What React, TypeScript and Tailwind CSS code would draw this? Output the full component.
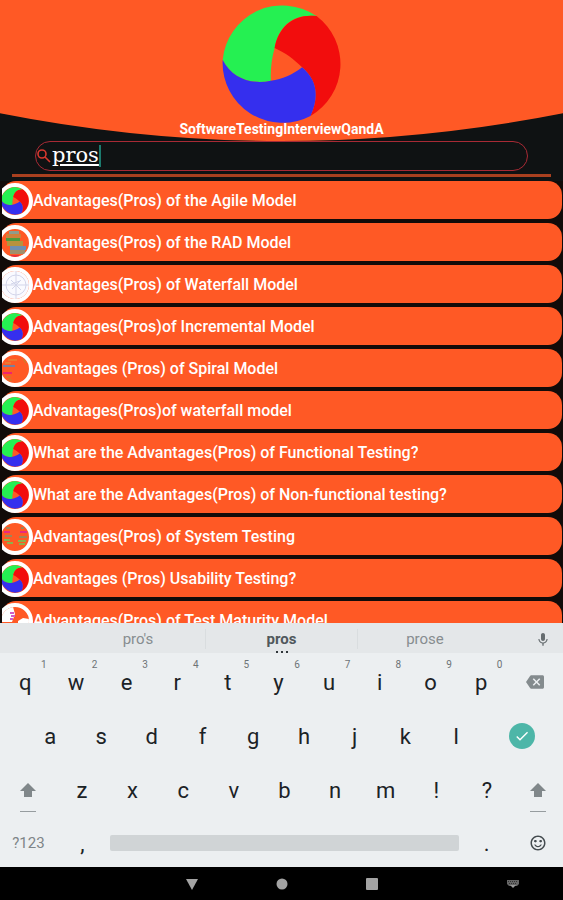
import { useState } from "react";
import { MdBackspace, MdCheck, MdKeyboardVoice, MdSentimentSatisfiedAlt } from "react-icons/md";

type Thumb = "logo" | "rad" | "waterfall" | "spiral" | "system" | "maturity";

const questions: { title: string; thumb: Thumb }[] = [
  { title: "Advantages(Pros) of the Agile Model", thumb: "logo" },
  { title: "Advantages(Pros) of the RAD Model", thumb: "rad" },
  { title: "Advantages(Pros) of Waterfall Model", thumb: "waterfall" },
  { title: "Advantages(Pros)of Incremental Model", thumb: "logo" },
  { title: "Advantages (Pros) of Spiral Model", thumb: "spiral" },
  { title: "Advantages(Pros)of waterfall model", thumb: "logo" },
  { title: "What are the Advantages(Pros) of Functional Testing?", thumb: "logo" },
  { title: "What are the Advantages(Pros) of Non-functional testing?", thumb: "logo" },
  { title: "Advantages(Pros) of System Testing", thumb: "system" },
  { title: "Advantages (Pros) Usability Testing?", thumb: "logo" },
  { title: "Advantages(Pros) of Test Maturity Model", thumb: "maturity" },
];

const topKeys = ["q", "w", "e", "r", "t", "y", "u", "i", "o", "p"];
const middleKeys = ["a", "s", "d", "f", "g", "h", "j", "k", "l"];
const bottomKeys = ["z", "x", "c", "v", "b", "n", "m", "!", "?"];

function Logo({ className }: { className?: string }) {
  return (
    <svg viewBox="0 0 358 358" className={className} aria-hidden="true">
      <path fill="#25f052" d="M2 164A179 179 0 0 1 282 33C215 25 170 60 157 128C148 160 144 195 146 226C90 238 30 220 2 164Z" />
      <path fill="#f20d0d" d="M282 33A179 179 0 0 1 264 331C290 275 285 225 239 186C213 160 190 143 157 128C168 65 215 25 282 33Z" />
      <path fill="#352fee" d="M2 164A179 179 0 0 0 264 331C290 275 285 225 239 186C210 208 180 222 146 226C90 238 30 220 2 164Z" />
    </svg>
  );
}

function ThumbArt({ kind }: { kind: Thumb }) {
  if (kind === "logo") return <Logo className="size-full" />;
  return (
    <svg viewBox="0 0 28 28" className="size-full" aria-hidden="true">
      {kind === "rad" && (
        <>
          <path fill="#8f9c8c" d="M8 2h10v3H8z" />
          <path fill="#d0803c" d="M5 5h15v4H5z" />
          <path fill="#4f9a3c" d="M5 9h14v3H5z" />
          <path fill="#b8923c" d="M6 12h16v5H6z" />
          <path fill="#6f8fb0" d="M9 17h16v4H9z" />
          <path fill="#a0906c" d="M9 21h15v4H9z" />
          <path fill="#e8303c" d="M10 26h8v2h-8z" />
        </>
      )}
      {kind === "waterfall" && (
        <>
          <path fill="#fafaff" d="M-4-4h36v36H-4z" />
          <g fill="none" stroke="#d3d5ea" strokeWidth="1">
            <circle cx="15" cy="14" r="10" />
            <path d="M15 0v28M1 14h28M10 9l10 10M20 9l-9 9M10 13l9-3" />
          </g>
        </>
      )}
      {kind === "spiral" && (
        <>
          <path stroke="#d89a3c" d="M7 5h9M4 8h6" />
          <path stroke="#7a7f9c" strokeWidth="2" d="M2 11h12" />
          <path stroke="#ee2470" strokeWidth="2" d="M2 18h9" />
          <path stroke="#b98a2c" d="M5 22h5M7 25h4M22 4l3 4" />
        </>
      )}
      {kind === "system" && (
        <>
          <path stroke="#e82a80" strokeWidth="2" d="M3 9h6M19 9h7" />
          <path stroke="#a08458" strokeWidth="2" d="M5 5h4M20 5h3M4 13h7M18 14h8" />
          <path stroke="#8fb04c" strokeWidth="2" d="M3 17h6M6 20h6M17 18h8M18 21h6" />
        </>
      )}
      {kind === "maturity" && (
        <>
          <path fill="#fff" d="M0 0h12l2 7-3 8H0z" />
          <path stroke="#d05cc8" strokeWidth="2" d="M9 6h4M10 9h4M9 12h3" />
          <path fill="#fff" d="M17 14l5-3 6 1v9H17z" />
        </>
      )}
    </svg>
  );
}

function Key({ label, hint }: { label: string; hint?: string }) {
  return (
    <button className="relative flex min-w-0 items-center justify-center pt-[6px] text-[22px] leading-7 text-[#1b2226]">
      {label}
      {hint && <span className="absolute top-1 right-1 text-[10px] leading-4 text-[#6d7376]">{hint}</span>}
    </button>
  );
}

function ShiftKey() {
  return (
    <button aria-label="Shift" className="flex min-w-0 flex-col items-center justify-center gap-[14px] pt-[18px]">
      <svg viewBox="0 0 16 14" className="h-[14px] w-4 fill-[#80878a]" aria-hidden="true">
        <path d="M8 0l8 8h-4v6H4V8H0z" />
      </svg>
      <span className="h-px w-4 bg-[#969c9f]" />
    </button>
  );
}

function Keyboard() {
  return (
    <section aria-label="Keyboard" className="shrink-0 bg-[#eceff1]">
      <div className="grid h-[30px] grid-cols-[71fr_134fr_153fr_134fr_71fr] items-center bg-[#e4e7e9] pt-[2px] text-[15px] leading-5 text-[#878d90]">
        <span />
        <button>pro's</button>
        <button className="relative border-x border-[#d9dddf] font-bold text-[#50585c]">
          pros
          <span className="absolute inset-x-0 -bottom-1 flex justify-center gap-[3px]">
            <span className="size-[2px] bg-[#30363a]" />
            <span className="size-[2px] bg-[#30363a]" />
            <span className="size-[2px] bg-[#30363a]" />
          </span>
        </button>
        <button>prose</button>
        <button aria-label="Voice input" className="flex justify-end pr-3">
          <MdKeyboardVoice className="size-4 text-[#666d70]" />
        </button>
      </div>

      <div className="grid h-[54px] grid-cols-[repeat(10,51fr)_57fr]">
        {topKeys.map((key, i) => (
          <Key key={key} label={key} hint={String((i + 1) % 10)} />
        ))}
        <button aria-label="Backspace" className="flex items-center justify-center pt-1">
          <MdBackspace className="size-[18px] text-[#848b8e]" />
        </button>
      </div>

      <div className="grid h-[54px] grid-cols-[repeat(9,51fr)_82fr] pl-[25px]">
        {middleKeys.map((key) => (
          <Key key={key} label={key} />
        ))}
        <button aria-label="Done" className="flex items-center justify-center pt-1">
          <span className="flex size-[26px] items-center justify-center rounded-full bg-[#4db6a8]">
            <MdCheck className="size-4 text-white" />
          </span>
        </button>
      </div>

      <div className="grid h-[54px] grid-cols-[57fr_repeat(9,51fr)_51fr]">
        <ShiftKey />
        {bottomKeys.map((key) => (
          <Key key={key} label={key} />
        ))}
        <ShiftKey />
      </div>

      <div className="grid h-[52px] grid-cols-[57fr_51fr_354fr_51fr_51fr]">
        <button className="pt-1 text-[15px] text-[#7e8588]">?123</button>
        <Key label="," />
        <button aria-label="Space" className="flex items-center px-[2px] pt-1">
          <span className="h-4 w-full rounded-xs bg-[#d0d4d6]" />
        </button>
        <Key label="." />
        <button aria-label="Emoji" className="flex items-center justify-center pt-1">
          <MdSentimentSatisfiedAlt className="size-[18px] text-[#454c50]" />
        </button>
      </div>
    </section>
  );
}

function NavBar() {
  return (
    <nav className="grid h-[33px] shrink-0 grid-cols-[1fr_270px_1fr] items-center bg-black">
      <span />
      <div className="grid grid-cols-3 justify-items-center">
        <button aria-label="Back">
          <svg viewBox="0 0 12 12" className="size-3 fill-[#a3a3a3]">
            <path d="M0 1h12L6 12z" />
          </svg>
        </button>
        <button aria-label="Home">
          <svg viewBox="0 0 12 12" className="size-3 fill-[#a3a3a3]">
            <circle cx="6" cy="6" r="5.5" />
          </svg>
        </button>
        <button aria-label="Recent apps">
          <svg viewBox="0 0 12 12" className="size-3 fill-[#a3a3a3]">
            <rect width="12" height="12" rx="1" />
          </svg>
        </button>
      </div>
      <button aria-label="Switch keyboard" className="flex justify-end pr-[44px]">
        <svg viewBox="0 0 12 8" className="h-2 w-3">
          <path fill="#666" d="M0 0h12v4l-2 2H2L0 4z" />
          <path stroke="#333" strokeWidth="1" strokeDasharray="1 1" d="M1 1.5h10M2 3.5h8" />
          <path fill="#999" d="M3 5h6L6 8z" />
        </svg>
      </button>
    </nav>
  );
}

export default function App() {
  const [query, setQuery] = useState("pros");

  return (
    <div className="flex h-screen flex-col overflow-hidden bg-[#0f1213] font-['Roboto',sans-serif]">
      {/* Header */}
      <header className="relative flex shrink-0 flex-col items-center pt-[5px]">
        <svg viewBox="0 0 563 142" preserveAspectRatio="none" className="absolute inset-0 size-full" aria-hidden="true">
          <path fill="#ff5925" d="M0 0H563V114Q422 142 281 142Q141 142 0 114Z" />
        </svg>
        <Logo className="relative size-[120px]" />
        <h1 className="relative -mt-1 pb-1 text-[14px] leading-4 font-bold text-white">SoftwareTestingInterviewQandA</h1>
      </header>

      {/* Search */}
      <label className="mx-[35px] flex h-[30px] shrink-0 items-center rounded-full border border-[#a82a35]">
        <svg viewBox="0 0 16 16" className="size-4 fill-none stroke-[#d8382e]" strokeWidth="1.6" aria-hidden="true">
          <circle cx="6" cy="6" r="4" />
          <path d="M9 9l5 5" />
        </svg>
        <input
          type="text"
          aria-label="Search questions"
          value={query}
          onChange={(e) => setQuery(e.target.value)}
          className="field-sizing-content pb-[2px] font-['DejaVu_Serif',serif] text-[21px] leading-6 text-white underline decoration-2 underline-offset-2 outline-none"
        />
        <span className="h-[22px] w-[2px] bg-[#1b7a6e]" />
      </label>

      <div className="mx-3 mt-[3px] h-[3px] shrink-0 bg-[#a9401f]" />

      {/* Results */}
      <ul className="mt-1 flex min-h-0 flex-1 flex-col gap-1 overflow-hidden bg-[#120b09] pr-px pl-[2px]">
        {questions.map(({ title, thumb }) => (
          <li key={title} className="shrink-0">
            <button className="flex h-[38px] w-full items-center rounded-[14px] bg-[#ff5925] pt-px text-left">
              <span className="flex w-[31px] shrink-0 justify-end overflow-hidden">
                <span className="size-9 shrink-0 overflow-hidden rounded-full border-4 border-white">
                  <ThumbArt kind={thumb} />
                </span>
              </span>
              <span className="truncate text-[16px] leading-5 font-medium text-white">{title}</span>
            </button>
          </li>
        ))}
      </ul>

      <Keyboard />
      <NavBar />
    </div>
  );
}
